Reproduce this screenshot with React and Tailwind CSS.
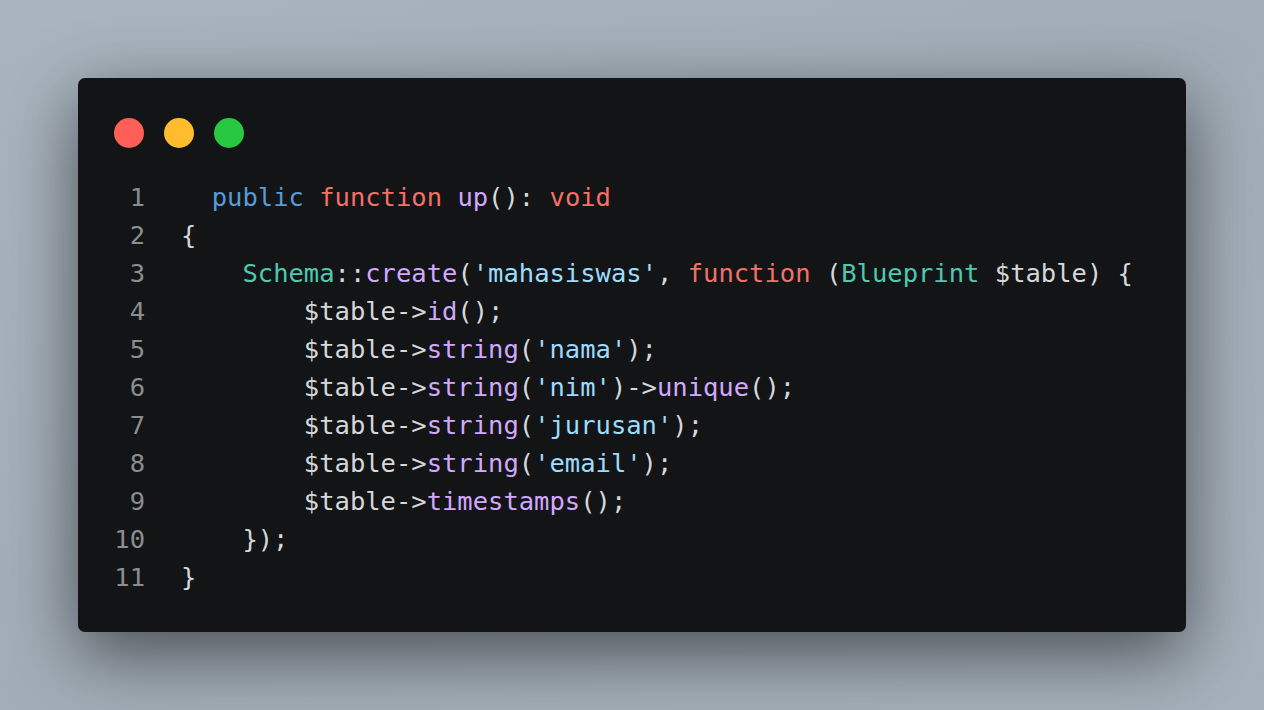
import React from 'react';

// token colours
const C = {
  kw: 'text-[#569cd6]',
  fn: 'text-[#f47067]',
  call: 'text-[#d2a8ff]',
  cls: 'text-[#4ec9b0]',
  str: 'text-[#9cdcfe]',
  txt: 'text-[#d4d8dd]',
};

const lines = [
  [['  ', 'txt'], ['public', 'kw'], [' ', 'txt'], ['function', 'fn'], [' ', 'txt'], ['up', 'call'], ['(): ', 'txt'], ['void', 'fn']],
  [['{', 'txt']],
  [['    ', 'txt'], ['Schema', 'cls'], ['::', 'txt'], ['create', 'call'], ['(', 'txt'], ["'mahasiswas'", 'str'], [', ', 'txt'], ['function', 'fn'], [' (', 'txt'], ['Blueprint', 'cls'], [' $table) {', 'txt']],
  [['        $table->', 'txt'], ['id', 'call'], ['();', 'txt']],
  [['        $table->', 'txt'], ['string', 'call'], ['(', 'txt'], ["'nama'", 'str'], [');', 'txt']],
  [['        $table->', 'txt'], ['string', 'call'], ['(', 'txt'], ["'nim'", 'str'], [')->', 'txt'], ['unique', 'call'], ['();', 'txt']],
  [['        $table->', 'txt'], ['string', 'call'], ['(', 'txt'], ["'jurusan'", 'str'], [');', 'txt']],
  [['        $table->', 'txt'], ['string', 'call'], ['(', 'txt'], ["'email'", 'str'], [');', 'txt']],
  [['        $table->', 'txt'], ['timestamps', 'call'], ['();', 'txt']],
  [['    });', 'txt']],
  [['}', 'txt']],
];

export default function App() {
  return (
    <div className="flex h-[710px] w-full items-center justify-center bg-gradient-to-br from-[#a9b4be] via-[#a2adb7] to-[#a6b1bb]">
      <div className="h-[554px] w-[1108px] rounded-[7px] bg-[#131416] px-9 pt-10 shadow-[0_22px_70px_rgba(0,0,0,0.55)]">
        <div className="flex gap-5">
          <span className="h-[30px] w-[30px] rounded-full bg-[#ff5f57]" />
          <span className="h-[30px] w-[30px] rounded-full bg-[#ffbd2e]" />
          <span className="h-[30px] w-[30px] rounded-full bg-[#28c840]" />
        </div>
        <div className="mt-[30px] font-['DejaVu_Sans_Mono',monospace] text-[25.5px] leading-[38px]">
          {lines.map((tokens, i) => (
            <div key={i} className="flex">
              <span className="w-[31px] shrink-0 text-right text-[#8b8d90]">{i + 1}</span>
              <pre className="ml-9 font-['DejaVu_Sans_Mono',monospace]">
                {tokens.map(([t, k], j) => (
                  <span key={j} className={C[k]}>{t}</span>
                ))}
              </pre>
            </div>
          ))}
        </div>
      </div>
    </div>
  );
}
